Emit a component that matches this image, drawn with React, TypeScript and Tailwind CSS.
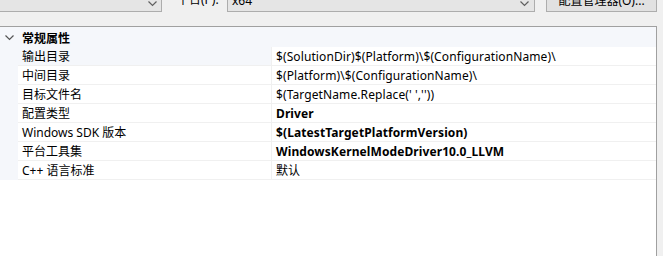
import { FC } from "react";

type Row = {
  label: string;
  value: string;
  bold?: boolean;
  tinted?: boolean;
};

const rows: Row[] = [
  { label: "输出目录", value: "$(SolutionDir)$(Platform)\\$(ConfigurationName)\\", tinted: true },
  { label: "中间目录", value: "$(Platform)\\$(ConfigurationName)\\" },
  { label: "目标文件名", value: "$(TargetName.Replace(' ',''))" },
  { label: "配置类型", value: "Driver", bold: true },
  { label: "Windows SDK 版本", value: "$(LatestTargetPlatformVersion)", bold: true },
  { label: "平台工具集", value: "WindowsKernelModeDriver10.0_LLVM", bold: true },
  { label: "C++ 语言标准", value: "默认" },
];

const font = { fontFamily: '"Noto Sans", "Noto Sans CJK SC", sans-serif' };

const Chevron: FC<{ className?: string }> = ({ className }) => (
  <svg width="9" height="6" viewBox="0 0 9 6" className={className}>
    <path d="M0.5 0.5 L4.5 4.5 L8.5 0.5" fill="none" stroke="currentColor" strokeWidth="1.2" />
  </svg>
);

const PropRow: FC<{ row: Row }> = ({ row }) => (
  <div className="flex h-[19px] text-[12px] leading-[18px] text-black">
    <div className="w-[18px] shrink-0 bg-[#f5f7fb]" />
    <div
      className={
        "w-[254px] shrink-0 pl-[4px] pt-[1px] border-b border-r border-[#f0f0f0] " +
        (row.tinted ? "bg-[#f5f7fb]" : "bg-white")
      }
    >
      {row.label}
    </div>
    <div
      className={
        "flex-1 pl-[4px] pt-[1px] border-b border-[#f0f0f0] whitespace-nowrap tracking-[0.1px] " +
        (row.bold ? "font-bold" : "")
      }
    >
      {row.value}
    </div>
  </div>
);

export default function App() {
  return (
    <div className="w-[663px] h-[256px] overflow-hidden bg-[#f0f0f0] flex flex-col" style={font}>
      <div className="h-[26px] shrink-0 flex items-start text-[12px] text-black">
        <div className="-mt-[10px] ml-[-10px] w-[172px] h-[22px] bg-[#e5e5e5] border border-[#adadad] flex items-end justify-end pr-[4px] pb-[4px] text-[#606060]">
          <Chevron />
        </div>
        <div className="-mt-[9px] ml-[15px] w-[50px] leading-[18px]">平台(P):</div>
        <div className="-mt-[10px] w-[308px] h-[22px] bg-[#e5e5e5] border border-[#adadad] flex items-center justify-between pl-[4px] pr-[5px] leading-[18px]">
          <span className="-mt-[1px]">x64</span>
          <Chevron className="mt-[6px] text-[#606060]" />
        </div>
        <div className="-mt-[10px] ml-[11px] w-[111px] h-[22px] bg-[#e1e1e1] border border-[#adadad] flex items-center justify-center leading-[18px]">
          配置管理器(O)...
        </div>
      </div>
      <div className="flex-1 w-[657px] bg-white border-t border-r border-[#a0a0a0] flex flex-col">
        <div className="h-[20px] flex items-center bg-[#f5f7fb] text-[12px] leading-[18px] font-bold text-black">
          <div className="w-[18px] pt-[2px] flex justify-center text-[#555]">
            <Chevron />
          </div>
          <span className="pl-[4px] pt-[3px]">常规属性</span>
        </div>
        {rows.map((r) => (
          <PropRow key={r.label} row={r} />
        ))}
      </div>
    </div>
  );
}
